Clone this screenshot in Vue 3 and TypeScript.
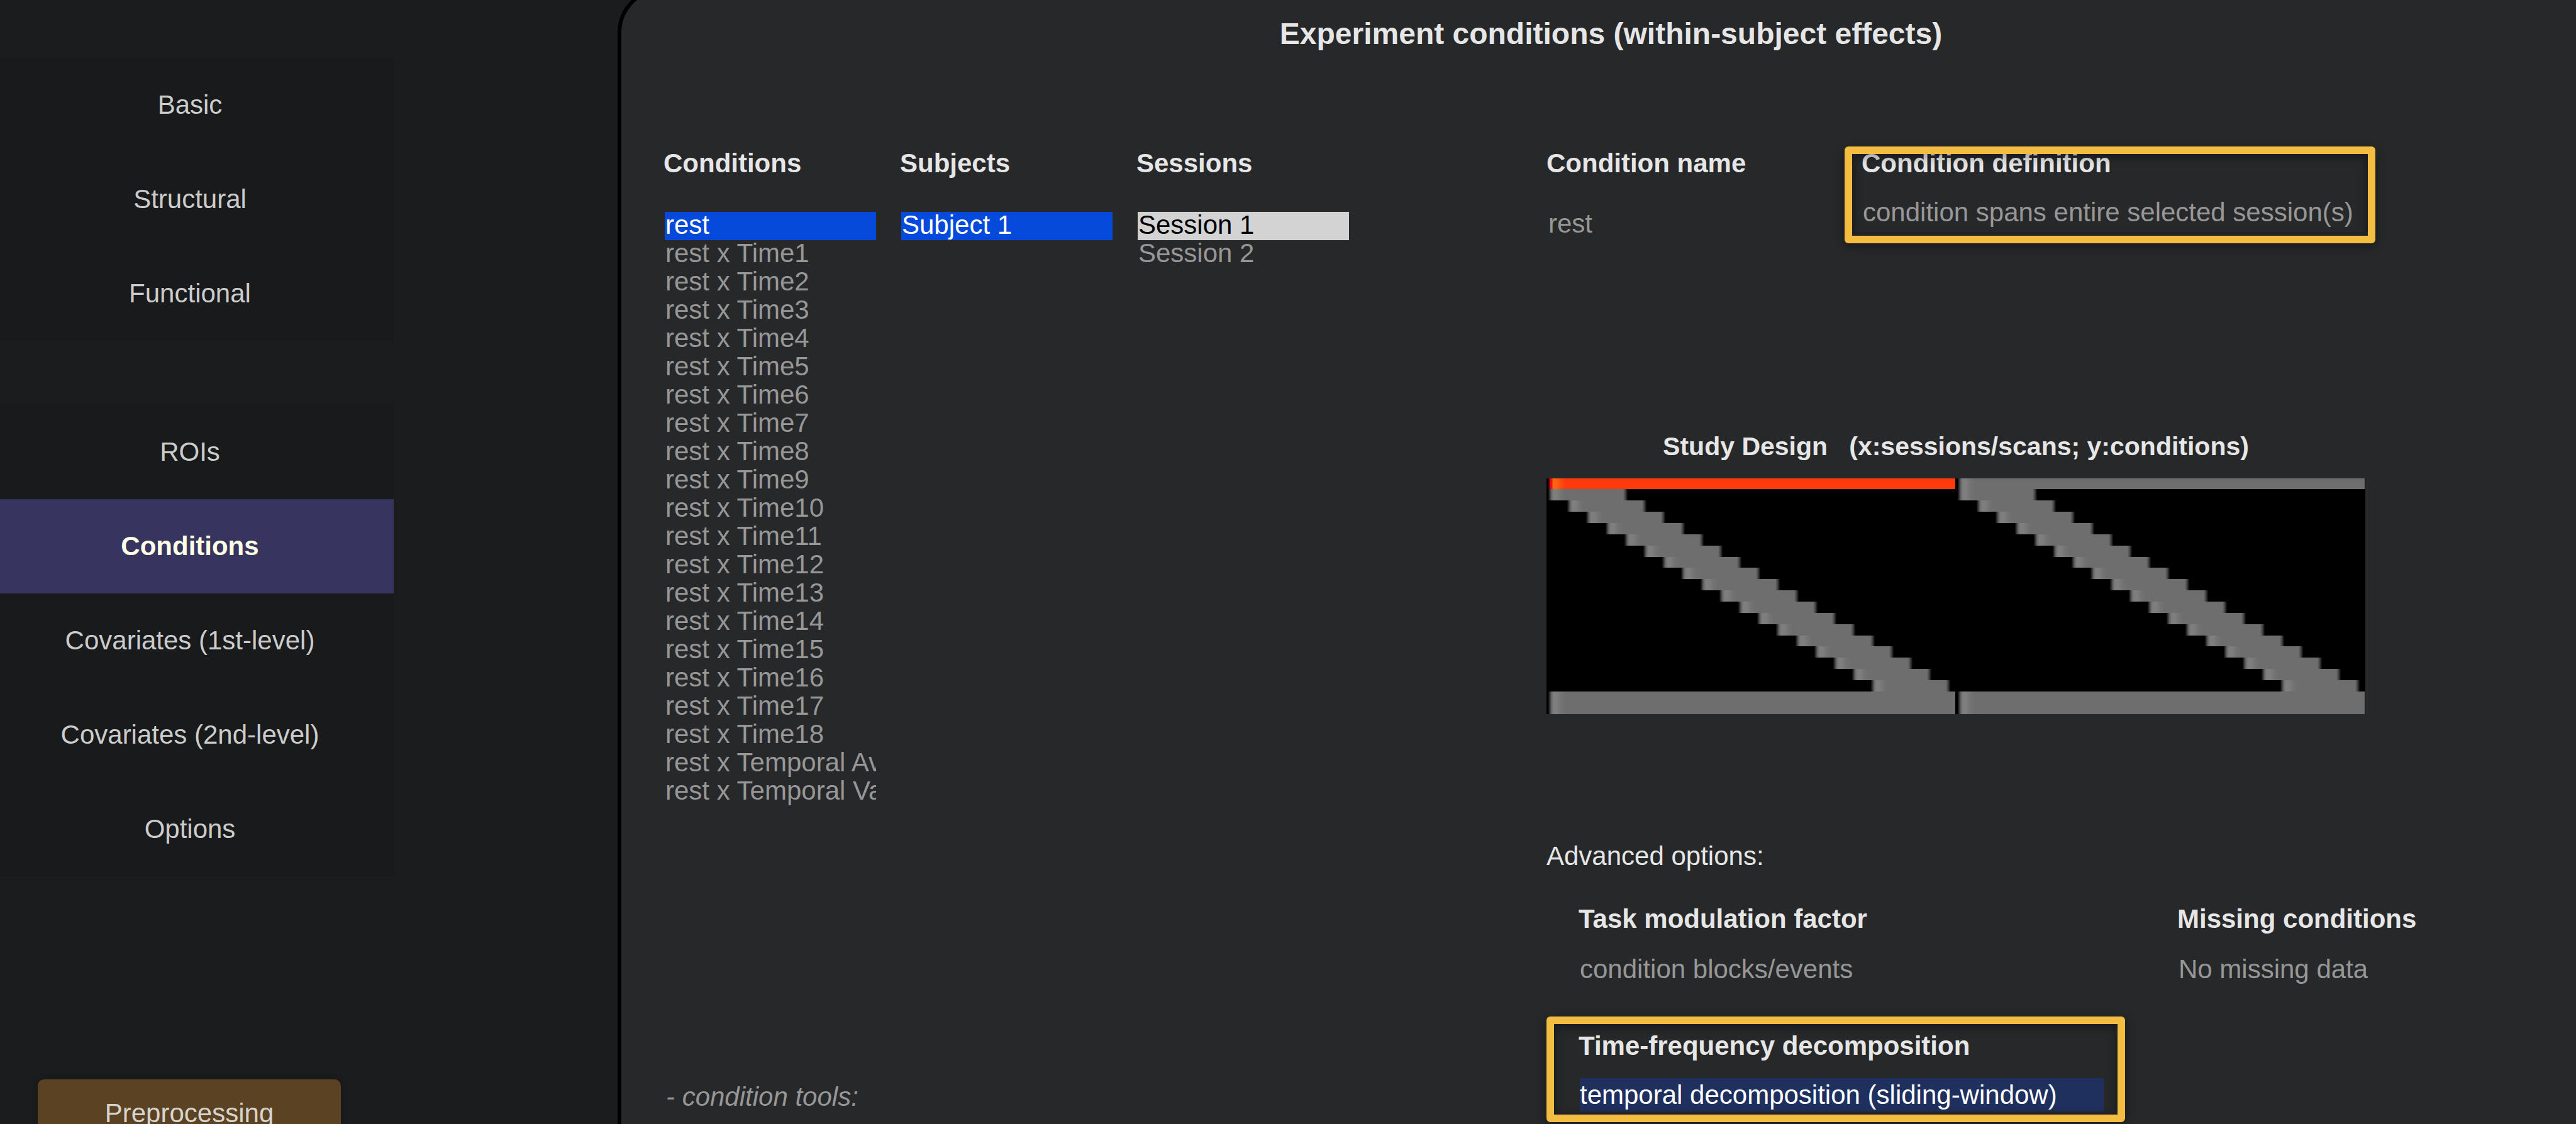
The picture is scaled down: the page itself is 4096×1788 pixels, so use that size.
<script setup lang="ts">
import { ref } from 'vue'

interface Bar {
  x: number
  y: number
  width: number
  height: number
  active: boolean
  tail: boolean
}

const navGroups: string[][] = [
  ['Basic', 'Structural', 'Functional'],
  ['ROIs', 'Conditions', 'Covariates (1st-level)', 'Covariates (2nd-level)', 'Options'],
]
const activeTab = ref('Conditions')

const conditions: string[] = [
  'rest',
  ...Array.from({ length: 18 }, (_, i) => `rest x Time${i + 1}`),
  'rest x Temporal Average',
  'rest x Temporal Variability',
]
const lists = [
  { id: 'conditions', label: 'Conditions', items: conditions, muted: false },
  { id: 'subjects', label: 'Subjects', items: ['Subject 1'], muted: false },
  { id: 'sessions', label: 'Sessions', items: ['Session 1', 'Session 2'], muted: true },
]

const conditionName = ref('rest')

// Study design: one row per condition, one block per session.
const chartWidth = 1302
const chartHeight = 375
const sessionWidth = 651
const rampWidth = 27
const tailWidth = 7
const rowTop = (row: number): number => Math.floor((row * chartHeight) / conditions.length)

const bars: Bar[] = []
for (let session = 0; session < 2; session++) {
  conditions.forEach((_, row) => {
    const windowed = row > 0 && row < 19
    const start = windowed ? Math.round(3 + (row - 1) * 30.2) : 3
    bars.push({
      x: session * sessionWidth + start,
      y: rowTop(row),
      width: windowed ? 126 : sessionWidth - 4,
      height: rowTop(row + 1) - rowTop(row),
      active: session === 0 && row === 0,
      tail: windowed,
    })
  })
}
</script>

<template>
  <div class="app">
    <aside class="sidebar">
      <nav class="nav">
        <div v-for="(group, g) in navGroups" :key="g" class="nav-group">
          <button
            v-for="item in group"
            :key="item"
            type="button"
            class="nav-item"
            :class="{ active: item === activeTab }"
            @click="activeTab = item"
          >{{ item }}</button>
        </div>
      </nav>
      <button type="button" class="preprocessing">Preprocessing</button>
    </aside>

    <main class="panel">
      <h1 class="title">Experiment conditions (within-subject effects)</h1>
      <div class="columns">
        <section>
          <div class="lists">
            <div v-for="list in lists" :key="list.id" class="list">
              <label class="label" :for="list.id">{{ list.label }}</label>
              <select :id="list.id" class="listbox" :class="{ muted: list.muted }" multiple>
                <option v-for="(item, i) in list.items" :key="item" :selected="i === 0">{{ item }}</option>
              </select>
            </div>
          </div>
          <p class="tools">- condition tools:</p>
        </section>

        <section>
          <div class="fields">
            <div class="field name-field">
              <label class="label" for="name">Condition name</label>
              <input id="name" v-model="conditionName" class="value" type="text" />
            </div>
            <div class="field definition-field">
              <label class="label" for="definition">Condition definition</label>
              <select id="definition" class="value">
                <option>condition spans entire selected session(s)</option>
              </select>
            </div>
          </div>

          <figure class="design">
            <figcaption class="caption">Study Design &nbsp; (x:sessions/scans; y:conditions)</figcaption>
            <svg class="chart" :viewBox="`0 0 ${chartWidth} ${chartHeight}`" shape-rendering="crispEdges">
              <defs>
                <linearGradient id="ramp">
                  <stop offset="0" stop-color="#0c0c0c" />
                  <stop offset="0.08" stop-color="#333" />
                  <stop offset="0.18" stop-color="#666" />
                  <stop offset="0.3" stop-color="#7e7e7e" />
                  <stop offset="0.5" stop-color="#7e7e7e" />
                  <stop offset="0.75" stop-color="#737373" />
                  <stop offset="1" stop-color="#6e6e6e" />
                </linearGradient>
                <linearGradient id="ramp-active">
                  <stop offset="0" stop-color="#2a0808" />
                  <stop offset="0.1" stop-color="#a00a10" />
                  <stop offset="0.14" stop-color="#ff0a14" />
                  <stop offset="0.22" stop-color="#ff0a14" />
                  <stop offset="0.26" stop-color="#ff6410" />
                  <stop offset="0.45" stop-color="#ff6410" />
                  <stop offset="0.75" stop-color="#ff4a10" />
                  <stop offset="1" stop-color="#ff3b0e" />
                </linearGradient>
                <linearGradient id="tail">
                  <stop offset="0" stop-color="#6e6e6e" />
                  <stop offset="0.5" stop-color="#444" />
                  <stop offset="1" stop-color="#080808" />
                </linearGradient>
              </defs>
              <rect :width="chartWidth" :height="chartHeight" fill="#000" />
              <g v-for="(bar, i) in bars" :key="i">
                <rect
                  :x="bar.x"
                  :y="bar.y"
                  :width="bar.width"
                  :height="bar.height"
                  :fill="bar.active ? '#ff3b0e' : '#6e6e6e'"
                />
                <rect
                  :x="bar.x"
                  :y="bar.y"
                  :width="rampWidth"
                  :height="bar.height"
                  :fill="bar.active ? 'url(#ramp-active)' : 'url(#ramp)'"
                />
                <rect
                  v-if="bar.tail"
                  :x="bar.x + bar.width - tailWidth"
                  :y="bar.y"
                  :width="tailWidth"
                  :height="bar.height"
                  fill="url(#tail)"
                />
              </g>
            </svg>
          </figure>

          <h2 class="advanced">Advanced options:</h2>
          <div class="options">
            <div class="field">
              <label class="label" for="modulation">Task modulation factor</label>
              <select id="modulation" class="value">
                <option>condition blocks/events</option>
              </select>
            </div>
            <div class="field">
              <label class="label" for="missing">Missing conditions</label>
              <select id="missing" class="value">
                <option>No missing data</option>
              </select>
            </div>
            <div class="field decomposition-field">
              <label class="label" for="decomposition">Time-frequency decomposition</label>
              <select id="decomposition" class="value selected">
                <option>temporal decomposition (sliding-window)</option>
              </select>
            </div>
          </div>
        </section>
      </div>
    </main>
  </div>
</template>

<style>
body {
  margin: 0;
  background: #1b1c1d;
}
</style>

<style scoped>
.app {
  display: grid;
  grid-template-columns: 982px 1fr;
  height: 100vh;
  overflow: hidden;
  background: #1b1c1d;
  color: #e6e6e6;
  font-family: 'Liberation Sans', Arial, sans-serif;
  font-size: 42px;
  line-height: 48px;
}

button,
input,
select {
  box-sizing: border-box;
  margin: 0;
  padding: 0;
  border: 0;
  border-radius: 0;
  outline: 0;
  background: none;
  color: inherit;
  font: inherit;
  appearance: none;
}

/* Sidebar */
.nav {
  display: flex;
  flex-direction: column;
  gap: 102px;
  width: 626px;
  padding-top: 92px;
}

.nav-group {
  display: flex;
  flex-direction: column;
  background: #191a1b;
}

.nav-item {
  height: 150px;
  padding-right: 22px;
  color: #ccc;
  text-align: center;
}

.nav-item.active {
  background: #37355f;
  color: #ffffe6;
  font-weight: bold;
}

.preprocessing {
  display: block;
  width: 482px;
  height: 108px;
  margin: 323px 0 0 60px;
  border-radius: 10px;
  background: #5a4223;
  box-shadow: 0 0 8px #151617;
  color: #d8d4cd;
}

/* Main panel, running past the window on three sides */
.panel {
  margin: -20px -45px -80px 0;
  padding-top: 40px;
  border: 6px solid #000;
  border-radius: 72px;
  background: #27282a;
}

.title {
  margin: 0 0 154px;
  font-size: 48px;
  line-height: 56px;
  text-align: center;
}

.columns {
  display: grid;
  grid-template-columns: 1404px 1fr;
  padding-left: 67px;
}

.label {
  display: block;
  font-weight: bold;
}

.lists {
  display: flex;
  gap: 38px;
}

.list {
  width: 338px;
}

.listbox {
  display: block;
  width: 336px;
  height: 945px;
  margin: 53px 0 0 2px;
  overflow: hidden;
  color: #979797;
}

.listbox option {
  display: flex;
  align-items: center;
  box-sizing: border-box;
  height: 45px;
  min-height: 0;
  padding: 0 0 3px 1px;
  overflow: hidden;
  color: #979797;
}

.listbox option:checked {
  background: linear-gradient(#064adb, #064adb);
  color: #fff;
}

.listbox.muted option:checked {
  background: linear-gradient(#d3d3d3, #d3d3d3);
  color: #000;
}

.tools {
  margin: 439px 0 0 4px;
  color: #979797;
  font-style: italic;
}

.fields {
  display: flex;
  align-items: flex-start;
}

.value {
  display: block;
  width: 100%;
  height: 48px;
  padding-left: 2px;
  color: #979797;
}

.name-field {
  width: 501px;
}

.name-field .value {
  margin-top: 48px;
  padding-left: 3px;
}

.definition-field {
  position: relative;
  width: 790px;
}

.definition-field .value {
  margin-top: 30px;
}

/* Highlight frames laid over a field */
.definition-field::after,
.decomposition-field::after {
  content: '';
  position: absolute;
  border: 12px solid #f3bd42;
  border-radius: 6px;
  filter: drop-shadow(0 4px 8px rgba(0, 0, 0, 0.45));
  pointer-events: none;
}

.definition-field::after {
  inset: -3px -27px -25px;
}

.decomposition-field::after {
  inset: -23px -34px -17px -51px;
}

.design {
  max-width: 1302px;
  margin: 306px 0 202px;
}

.caption {
  margin-bottom: 27px;
  font-size: 41px;
  font-weight: bold;
  text-align: center;
}

.chart {
  display: block;
  width: 100%;
}

.advanced {
  margin: 0 0 52px;
  font-size: 42px;
  font-weight: normal;
}

.options {
  display: grid;
  grid-template-columns: 835px 1fr;
  gap: 74px 117px;
  padding-left: 51px;
}

.options .value {
  margin-top: 32px;
}

.decomposition-field {
  position: relative;
}

.options .value.selected {
  width: 833px;
  height: 53px;
  margin: 27px 0 0 2px;
  padding: 0;
  background: #1f305f;
  color: #fff;
}
</style>
